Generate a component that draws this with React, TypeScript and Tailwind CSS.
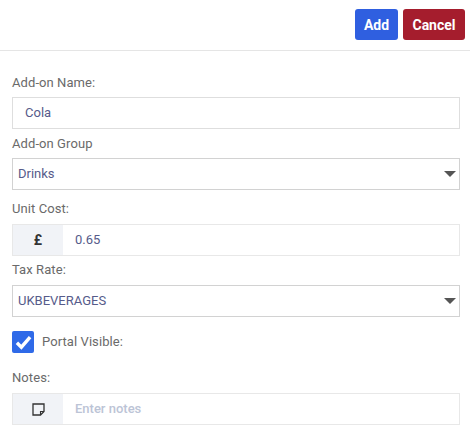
import type { ReactNode } from 'react';

function Select({ value }: { value: string }) {
  return (
    <div className="flex h-8 items-center justify-between border border-[#d2d2d2] pl-[5px] pr-[3px] text-[13px] text-[#565b8a]">
      <span>{value}</span>
      <span className="h-0 w-0 border-x-[6px] border-t-[6px] border-x-transparent border-t-[#555]" />
    </div>
  );
}

function Label({ children }: { children: ReactNode }) {
  return <div className="text-[13px] leading-4 tracking-[0.08px] text-[#6a6a6a]">{children}</div>;
}

export default function App() {
  return (
    <div className="h-[433px] w-[470px] overflow-hidden bg-white font-['Roboto',sans-serif]">
      <header className="flex h-[51px] items-start justify-end gap-[5px] border-b border-[#e5e5e5] pr-[5px] pt-[9px]">
        <button type="button" className="h-[31px] w-[43px] rounded-[3px] bg-[#2f5fe0] text-sm font-bold text-white">
          Add
        </button>
        <button type="button" className="h-[31px] w-[62px] rounded-[3px] bg-[#a51d2d] text-sm font-bold text-white">
          Cancel
        </button>
      </header>

      <main className="pl-3 pr-[10px]">
        <div className="pt-[24px]">
          <Label>Add-on Name:</Label>
        </div>
        <div className="mt-[6px] flex h-8 items-center border border-[#dedede] pl-3 text-[13px] text-[#565b8a]">Cola</div>

        <div className="mt-[7px]">
          <Label>Add-on Group</Label>
        </div>
        <div className="mt-[6px]">
          <Select value="Drinks" />
        </div>

        <div className="mt-[11px]">
          <Label>Unit Cost:</Label>
        </div>
        <div className="mt-[7px] flex h-8 border border-[#e8e8e8]">
          <div className="flex w-[50px] items-center justify-center bg-[#f1f3f7] text-sm font-bold text-[#333]">£</div>
          <div className="flex items-center pl-3 text-[13px] text-[#565b8a]">0.65</div>
        </div>

        <div className="mt-[6px]">
          <Label>Tax Rate:</Label>
        </div>
        <div className="mt-[7px]">
          <Select value="UKBEVERAGES" />
        </div>

        <div className="mt-[14px] flex items-center gap-2">
          <span className="flex h-[22px] w-[22px] items-center justify-center rounded-[2px] bg-[#2f6ae8]">
            <svg width="17" height="15" viewBox="0 0 16 14" fill="none" aria-hidden="true">
              <path d="M1.8 7.2 6 11.4 14.2 2" stroke="#fff" strokeWidth="3.2" />
            </svg>
          </span>
          <Label>Portal Visible:</Label>
        </div>

        <div className="mt-[17px]">
          <Label>Notes:</Label>
        </div>
        <div className="mt-[7px] flex h-8 border border-[#e8e8e8]">
          <div className="flex w-[50px] items-center justify-center bg-[#f1f3f7]">
            <svg width="13" height="13" viewBox="0 0 13 13" fill="none" aria-hidden="true">
              <path d="M1 1h11v7.5L8.5 12H1z" stroke="#333" strokeWidth="1.3" />
              <path d="M8.5 12V8.5H12" stroke="#333" strokeWidth="1.1" />
            </svg>
          </div>
          <div className="flex items-center pl-3 text-[13px] font-medium text-[#bcc4d6]">Enter notes</div>
        </div>
      </main>
    </div>
  );
}
